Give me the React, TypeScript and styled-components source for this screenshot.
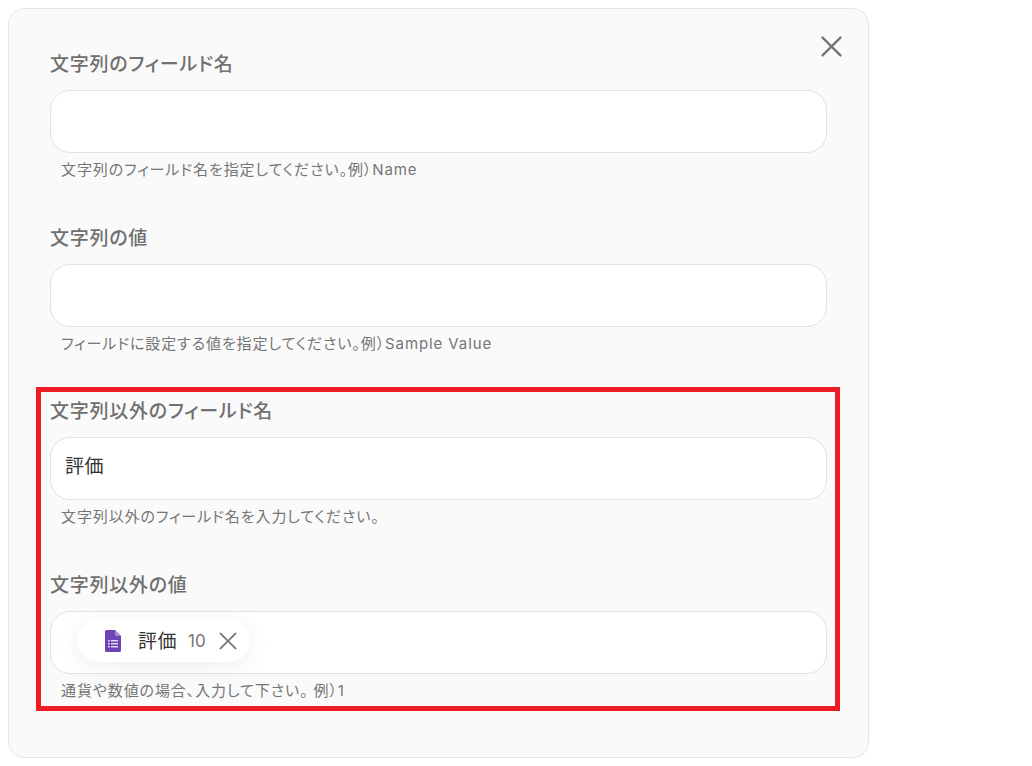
import styled, { createGlobalStyle } from 'styled-components'

const Global = createGlobalStyle`
   html, body {
      margin: 0;
      background: #fff;
   }
   * {
      box-sizing: border-box;
   }
`

const fields = [
   { label: '文字列のフィールド名', hint: '文字列のフィールド名を指定してください。例）Name' },
   { label: '文字列の値', hint: 'フィールドに設定する値を指定してください。例）Sample Value' },
   { label: '文字列以外のフィールド名', hint: '文字列以外のフィールド名を入力してください。', value: '評価' },
   { label: '文字列以外の値', hint: '通貨や数値の場合、入力して下さい。 例）1', chip: true },
]

const CrossIcon = ({ size, weight }: { size: number; weight: number }) => (
   <svg width={size} height={size} viewBox='0 0 20 20' fill='none' stroke='#757575' strokeWidth={weight} strokeLinecap='round'>
      <path d='M1.5 1.5 18.5 18.5M18.5 1.5 1.5 18.5' />
   </svg>
)

const FormsIcon = () => (
   <svg width='16' height='22' viewBox='0 0 16 22'>
      <path d='M1.5 0H10l6 6v14.5a1.5 1.5 0 0 1-1.5 1.5h-13A1.5 1.5 0 0 1 0 20.5v-19A1.5 1.5 0 0 1 1.5 0Z' fill='#6f42b8' />
      <path d='M10 0l6 6h-4.5A1.5 1.5 0 0 1 10 4.5Z' fill='#a98bd8' />
      <path d='M3 10h1.8v1.5H3zM6 10h7v1.5H6zM3 13h1.8v1.5H3zM6 13h7v1.5H6zM3 16h1.8v1.5H3zM6 16h7v1.5H6z' fill='#e4d9f5' />
   </svg>
)

const App = () => (
   <Page>
      <Global />
      <Panel>
         <CloseButton>
            <CrossIcon size={21} weight={2.2} />
         </CloseButton>

         <Form>
            {fields.map(f => (
               <Field key={f.label}>
                  <Label>{f.label}</Label>
                  <InputBox>
                     {f.value && <InputValue>{f.value}</InputValue>}
                     {f.chip && (
                        <Chip>
                           <FormsIcon />
                           <ChipName>評価</ChipName>
                           <ChipValue>10</ChipValue>
                           <CrossIcon size={18} weight={1.9} />
                        </Chip>
                     )}
                  </InputBox>
                  <Hint>{f.hint}</Hint>
               </Field>
            ))}
         </Form>

         <Highlight />
      </Panel>
   </Page>
)

const Page = styled.div`
   width: 1032px;
   height: 766px;
   padding: 8px 163px 8px 8px;
   font-family: Inter, 'Noto Sans CJK JP', sans-serif;
   overflow: hidden;
`

const Panel = styled.section`
   position: relative;
   height: 750px;
   padding: 41px 41px 0;
   background: #fafafa;
   border: 1px solid #e6e6e6;
   border-radius: 16px;
`

const CloseButton = styled.div`
   position: absolute;
   top: 27px;
   right: 26px;
   display: flex;
`

const Form = styled.div`
   display: grid;
   grid-auto-rows: 173.67px;
`

const Field = styled.div`
   display: flex;
   flex-direction: column;
`

const Label = styled.div`
   height: 28px;
   margin-bottom: 12px;
   font-size: 19px;
   line-height: 30px;
   font-weight: 500;
   letter-spacing: 0.75px;
   font-feature-settings: 'palt';
   color: #707070;
`

const InputBox = styled.div`
   height: 63px;
   padding: 8px 14px 0;
   background: #fff;
   border: 1px solid #e1e1e6;
   border-radius: 20px;
`

const InputValue = styled.div`
   font-size: 19px;
   line-height: 42px;
   letter-spacing: 0.5px;
   color: #333;
`

const Hint = styled.div`
   padding: 7px 11px 0;
   font-size: 15px;
   line-height: 20px;
   letter-spacing: 0.9px;
   font-feature-settings: 'palt';
   color: #757575;
`

const Chip = styled.div`
   display: inline-flex;
   align-items: center;
   height: 42px;
   margin-left: 12px;
   padding: 0 13px 0 28px;
   background: #fff;
   border-radius: 21px;
   box-shadow: 0 4px 24px rgba(0, 0, 0, 0.07);
`

const ChipName = styled.span`
   margin-left: 17px;
   margin-top: -2px;
   font-size: 19px;
   letter-spacing: 0.5px;
   color: #333;
`

const ChipValue = styled.span`
   margin: 0 13px 0 11px;
   font-size: 17px;
   color: #757575;
`

const Highlight = styled.div`
   position: absolute;
   top: 378px;
   left: 27px;
   width: 804px;
   height: 324px;
   border: 5px solid #ee1c25;
   pointer-events: none;
`

export default App
